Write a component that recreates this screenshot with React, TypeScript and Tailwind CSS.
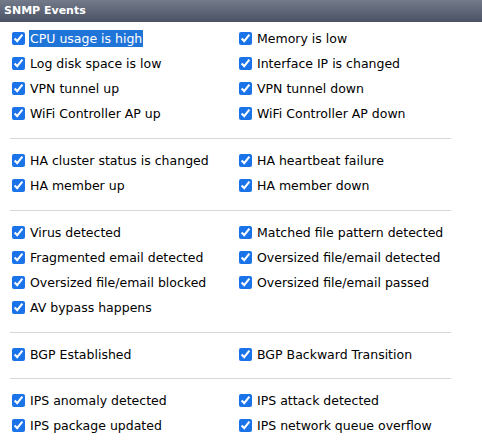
const sections: string[][] = [
  [
    'CPU usage is high',
    'Memory is low',
    'Log disk space is low',
    'Interface IP is changed',
    'VPN tunnel up',
    'VPN tunnel down',
    'WiFi Controller AP up',
    'WiFi Controller AP down',
  ],
  ['HA cluster status is changed', 'HA heartbeat failure', 'HA member up', 'HA member down'],
  [
    'Virus detected',
    'Matched file pattern detected',
    'Fragmented email detected',
    'Oversized file/email detected',
    'Oversized file/email blocked',
    'Oversized file/email passed',
    'AV bypass happens',
  ],
  ['BGP Established', 'BGP Backward Transition'],
  ['IPS anomaly detected', 'IPS attack detected', 'IPS package updated', 'IPS network queue overflow'],
]

function EventRow({ label, selected }: { label: string; selected?: boolean }) {
  return (
    <label className="flex h-[25px] items-center">
      <input type="checkbox" defaultChecked className="m-0 h-[13px] w-[13px] accent-[#1a73e8]" />
      <span
        className={`ml-[4px] px-px leading-[17px] ${selected ? 'bg-[#1f74d8] text-white' : 'text-black'}`}
      >
        {label}
      </span>
    </label>
  )
}

export default function App() {
  return (
    <div className="h-[443px] w-[482px] overflow-hidden bg-white font-['DejaVu_Sans',Verdana,sans-serif] text-[12.5px]">
      <div className="flex h-[22px] items-center bg-gradient-to-b from-[#737a8a] to-[#4b5264] pl-[4px] text-[11px] font-bold text-white">
        SNMP Events
      </div>
      <div className="pt-[4px]">
        {sections.map((items, i) => (
          <div key={i}>
            {i > 0 && (
              <div
                className={`mb-[9px] ml-[10px] h-px w-[441px] bg-[#d6d6d6] ${i === 4 ? 'mt-[11px]' : 'mt-[12px]'}`}
              />
            )}
            <div className="grid grid-cols-[227px_227px] pl-[12px]">
              {items.map((label, j) => (
                <EventRow key={label} label={label} selected={i === 0 && j === 0} />
              ))}
            </div>
          </div>
        ))}
      </div>
    </div>
  )
}
